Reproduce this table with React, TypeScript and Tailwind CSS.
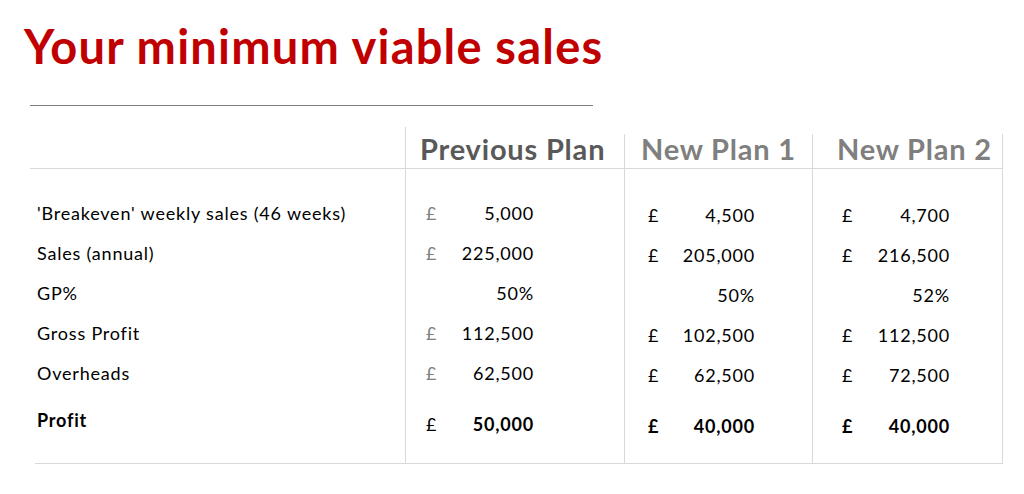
const rows = [
  { label: "'Breakeven' weekly sales (46 weeks)", vals: ["5,000", "4,500", "4,700"], pound: true },
  { label: "Sales (annual)", vals: ["225,000", "205,000", "216,500"], pound: true },
  { label: "GP%", vals: ["50%", "50%", "52%"], pound: false },
  { label: "Gross Profit", vals: ["112,500", "102,500", "112,500"], pound: true },
  { label: "Overheads", vals: ["62,500", "62,500", "72,500"], pound: true },
];

const profit = ["50,000", "40,000", "40,000"];

// per-column: width, left pad to the £, right end of the figure
const cols = [
  { w: "w-[219px]", pad: "pl-[20px]", box: "w-[108px]", poundColor: "text-[#7f7f7f]" },
  { w: "w-[188px]", pad: "pl-[23px]", box: "w-[107px]", poundColor: "text-black" },
  { w: "w-[191px]", pad: "pl-[29px]", box: "w-[108px]", poundColor: "text-black" },
];

function Cell({ col, value, pound, bold }: { col: number; value: string; pound: boolean; bold?: boolean }) {
  const c = cols[col];
  return (
    <div className={`${c.pad} flex items-center`}>
      <div className={`${c.box} flex justify-between`}>
        <span className={bold ? (col > 0 ? "font-bold text-black" : "text-black") : c.poundColor}>{pound ? "£" : ""}</span>
        <span className={bold ? "font-bold" : ""}>{value}</span>
      </div>
    </div>
  );
}

export default function App() {
  return (
    <div className="w-[1024px] h-[494px] bg-white text-black overflow-hidden font-['Lato','Liberation_Sans',sans-serif]">
      <h1 className="pl-[24px] pt-[19px] text-[47px] leading-[54px] font-bold text-[#c00000] tracking-[1.2px]">
        Your minimum viable sales
      </h1>
      <div className="ml-[30px] mt-[32px] w-[563px] h-px bg-[#7f7f7f]" />

      <div className="ml-[30px] mt-[21px] w-[973px]">
        {/* header */}
        <div className="flex h-[42px] border-b border-[#d9d9d9]">
          <div className="w-[375px]" />
          <div className="w-[219px] border-l border-[#d9d9d9] flex items-center pl-[14px] pt-[3px] text-[29px] font-bold text-[#595959] tracking-[0.8px]">
            Previous Plan
          </div>
          <div className="w-[188px] mt-[7px] border-l border-[#d9d9d9] flex items-center pl-[16px] pb-[4px] text-[29px] font-bold text-[#7f7f7f] tracking-[0.8px]">
            New Plan 1
          </div>
          <div className="w-[191px] mt-[7px] border-x border-[#d9d9d9] flex items-center pl-[24px] pb-[4px] text-[29px] font-bold text-[#7f7f7f] tracking-[0.8px]">
            New Plan 2
          </div>
        </div>

        {/* body */}
        <div className="flex text-[18px] tracking-[0.8px]">
          <div className="w-[375px] pt-[24px] pl-[7px]">
            {rows.map((r) => (
              <div key={r.label} className="h-[40px] flex items-center">{r.label}</div>
            ))}
            <div className="h-[48px] flex items-center font-bold pt-[6px]">Profit</div>
          </div>
          {cols.map((c, i) => (
            <div key={i} className={`${c.w} border-l border-[#d9d9d9] ${i === 2 ? "border-r" : ""} pt-[24px] pb-[22px]`}>
              {rows.map((r) => (
                <div key={r.label} className={`h-[40px] flex items-center ${i > 0 ? "pt-[4px]" : ""}`}>
                  <Cell col={i} value={r.vals[i]} pound={r.pound} />
                </div>
              ))}
              <div className={`h-[48px] flex items-center ${i > 0 ? "pt-[18px]" : "pt-[14px]"}`}>
                <Cell col={i} value={profit[i]} pound bold />
              </div>
            </div>
          ))}
        </div>
        <div className="ml-[5px] h-px bg-[#d9d9d9]" />
      </div>
    </div>
  );
}
